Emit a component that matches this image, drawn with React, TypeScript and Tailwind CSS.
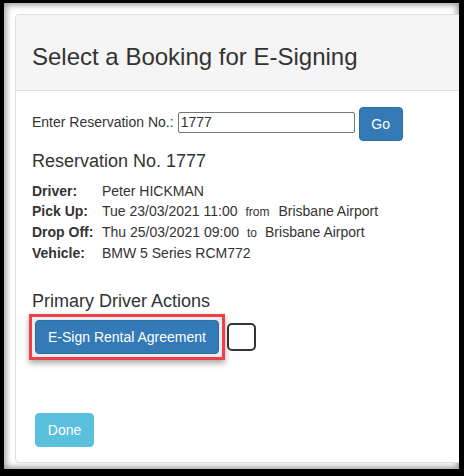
import React from 'react';

const font = { fontFamily: '"Liberation Sans", Arial, sans-serif' };

type Row = { label: string; value: React.ReactNode };

const rows: Row[] = [
  { label: 'Driver:', value: 'Peter HICKMAN' },
  {
    label: 'Pick Up:',
    value: (
      <>
        Tue 23/03/2021 11:00
        <span className="text-[12px] ml-[8px] mr-[9px]">from</span>
        Brisbane Airport
      </>
    ),
  },
  {
    label: 'Drop Off:',
    value: (
      <>
        Thu 25/03/2021 09:00
        <span className="text-[12px] mx-[8px]">to</span>
        Brisbane Airport
      </>
    ),
  },
  { label: 'Vehicle:', value: 'BMW 5 Series RCM772' },
];

export default function App() {
  return (
    <div
      className="w-[464px] h-[476px] bg-black pt-[3px] pl-[4px] pr-[5px] pb-[7px]"
      style={font}
    >
      <div className="w-full h-full bg-white overflow-hidden pt-[11px] pl-[11px] shadow-[inset_0_0_6px_2px_rgba(0,0,0,0.4)]">
        <div className="w-[470px] border border-[#ddd] rounded-[4px] bg-white text-[#333]">
          {/* Header */}
          <div className="bg-[#f5f5f5] border-b border-[#ddd] rounded-t-[4px] pt-[29px] pb-[20px] pl-[16px]">
            <h1 className="text-[24px] leading-[26px]">Select a Booking for E-Signing</h1>
          </div>

          {/* Body */}
          <div className="pt-[16px] pl-[16px] pb-[15px]">
            <div className="flex items-start h-[34px]">
              <label className="text-[14px] leading-[20px] mt-[5px]">Enter Reservation No.:</label>
              <input
                defaultValue="1777"
                className="ml-[4px] mt-[5px] w-[177px] h-[21px] border border-[#767676] rounded-[2px] px-[2px] text-[14px] text-[#333] outline-none"
              />
              <button className="ml-[4px] w-[44px] h-[34px] rounded-[4px] bg-[#337ab7] border border-[#2e6da4] text-white text-[14px]">
                Go
              </button>
            </div>

            <h2 className="mt-[10px] text-[18px] leading-[20px]">Reservation No. 1777</h2>

            <div className="mt-[10px] grid grid-cols-[70px_1fr] text-[14px] leading-[20px]">
              {rows.map((r) => (
                <React.Fragment key={r.label}>
                  <div className="font-bold">{r.label}</div>
                  <div>{r.value}</div>
                </React.Fragment>
              ))}
            </div>

            <h2 className="mt-[28px] text-[18px] leading-[20px]">Primary Driver Actions</h2>

            <div className="mt-[3px] -ml-[3px] flex items-center">
              <div className="border-[3px] border-[#ec4148] p-[3px] bg-[#ececec] shadow-[0_3px_6px_rgba(0,0,0,0.35)]">
                <button className="w-[184px] h-[34px] rounded-[4px] bg-[#337ab7] border border-[#2e6da4] text-white text-[14px]">
                  E-Sign Rental Agreement
                </button>
              </div>
              <div className="ml-[2px] w-[29px] h-[28px] rounded-[5px] border-2 border-[#333] bg-white" />
            </div>

            <button className="mt-[53px] ml-[3px] w-[59px] h-[34px] rounded-[4px] bg-[#5bc0de] border border-[#5bc0de] text-white text-[14px]">
              Done
            </button>
          </div>
        </div>
      </div>
    </div>
  );
}
